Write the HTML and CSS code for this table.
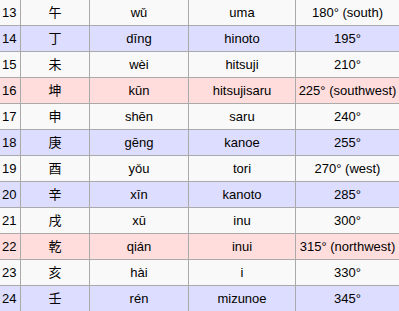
FILE: index.html
```html
<!DOCTYPE html>
<html lang="en">
<head>
    <meta charset="UTF-8" />
    <title>Earthly branches and directions</title>
    <link rel="stylesheet" href="styles.css">
</head>
<body>
    <table class="directions">
        <tr class="plain"><td class="num">13</td><td class="kanji">午</td><td>wǔ</td><td>uma</td><td>180° (south)</td></tr>
        <tr class="stem"><td class="num">14</td><td class="kanji">丁</td><td>dīng</td><td>hinoto</td><td>195°</td></tr>
        <tr class="plain"><td class="num">15</td><td class="kanji">未</td><td>wèi</td><td>hitsuji</td><td>210°</td></tr>
        <tr class="trigram"><td class="num">16</td><td class="kanji">坤</td><td>kūn</td><td>hitsujisaru</td><td>225° (southwest)</td></tr>
        <tr class="plain"><td class="num">17</td><td class="kanji">申</td><td>shēn</td><td>saru</td><td>240°</td></tr>
        <tr class="stem"><td class="num">18</td><td class="kanji">庚</td><td>gēng</td><td>kanoe</td><td>255°</td></tr>
        <tr class="plain"><td class="num">19</td><td class="kanji">酉</td><td>yǒu</td><td>tori</td><td>270° (west)</td></tr>
        <tr class="stem"><td class="num">20</td><td class="kanji">辛</td><td>xīn</td><td>kanoto</td><td>285°</td></tr>
        <tr class="plain"><td class="num">21</td><td class="kanji">戌</td><td>xū</td><td>inu</td><td>300°</td></tr>
        <tr class="trigram"><td class="num">22</td><td class="kanji">乾</td><td>qián</td><td>inui</td><td>315° (northwest)</td></tr>
        <tr class="plain"><td class="num">23</td><td class="kanji">亥</td><td>hài</td><td>i</td><td>330°</td></tr>
        <tr class="stem"><td class="num">24</td><td class="kanji">壬</td><td>rén</td><td>mizunoe</td><td>345°</td></tr>
    </table>
</body>
</html>
```

FILE: styles.css
```css
body {
    margin: 0;
    overflow: hidden;
    background: #f9f9f9;
    font-family: "Liberation Sans", Arial, sans-serif;
    font-size: 13px;
    color: #000;
}

.directions {
    border-collapse: separate;
    border-spacing: 0;
    table-layout: fixed;
    width: 400px;
}

.directions td {
    height: 25px;
    padding: 0;
    border-right: 1px solid #aaa;
    border-bottom: 1px solid #aaa;
    text-align: center;
    vertical-align: middle;
    white-space: nowrap;
    overflow: hidden;
}

.directions td:nth-child(1) { width: 20px; }
.directions td:nth-child(2) { width: 68px; }
.directions td:nth-child(3) { width: 98px; }
.directions td:nth-child(4) { width: 106px; }
.directions td:nth-child(5) { width: 103px; }

.directions td.num {
    text-align: left;
    padding-left: 2px;
    width: 18px;
}

.directions td.kanji {
    font-family: "Noto Sans CJK JP", sans-serif;
    font-size: 13px;
    padding-bottom: 2px;
    height: 23px;
}

.plain { background: #f9f9f9; }
.stem { background: #ddf; }
.trigram { background: #fdd; }
```
